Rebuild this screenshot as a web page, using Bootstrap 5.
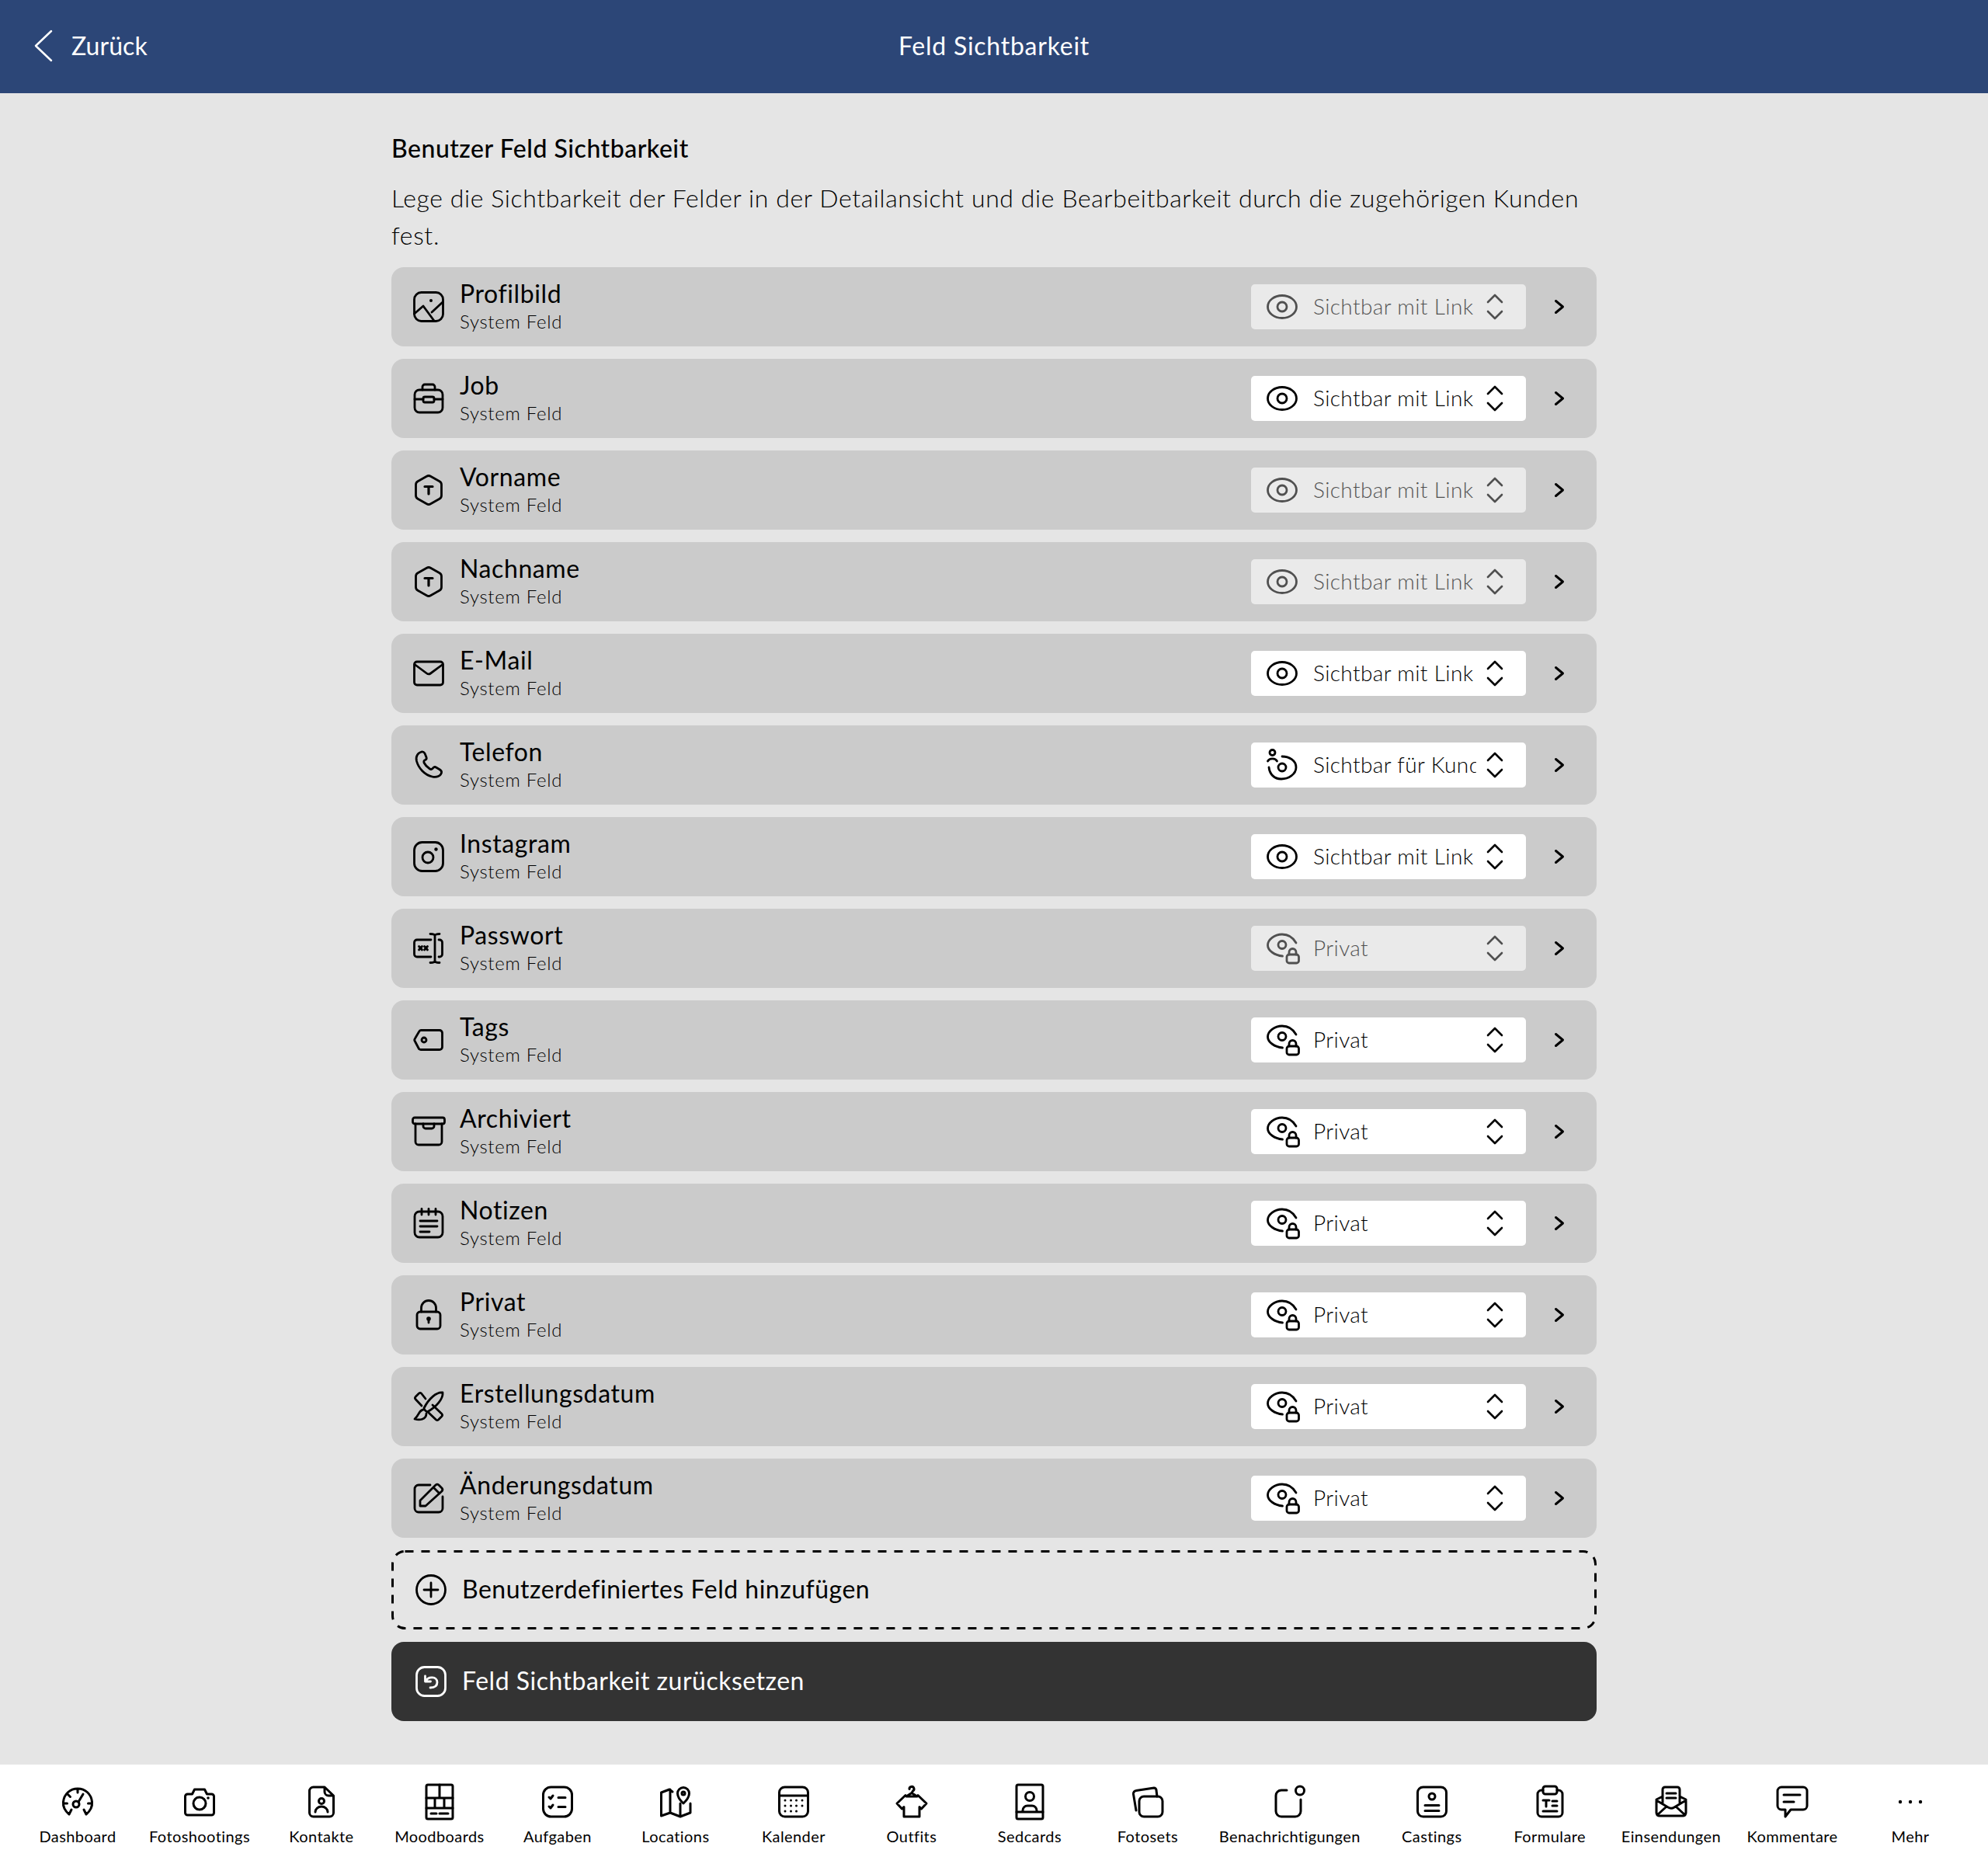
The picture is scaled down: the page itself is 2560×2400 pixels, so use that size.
<!DOCTYPE html>
<html lang="de">
<head>
<meta charset="utf-8">
<title>Feld Sichtbarkeit</title>
<link href="https://cdn.jsdelivr.net/npm/bootstrap@5.3.0/dist/css/bootstrap.min.css" rel="stylesheet">
<style>
body{background:#e5e5e5;font-family:"Lato","Liberation Sans",sans-serif;color:#000;min-height:2400px}
svg,symbol{overflow:visible}
svg{fill:none;stroke:currentColor;stroke-width:2.8;stroke-linecap:round;stroke-linejoin:round}
.ic40{width:40px;height:40px;flex:none}
.topbar{height:120px;background:#2c4677;color:#fff;font-size:32px;letter-spacing:.75px;padding-bottom:2px}
.topbar svg.backic{width:22px;height:40px;stroke-width:2.5}
.backlink{left:45px;top:39px;gap:25px;letter-spacing:.05px;line-height:40px}
.pagewrap{width:1552px;padding-top:47px;padding-bottom:56px}
.h-title{font-size:32px;line-height:48px;margin-bottom:16px;font-weight:500;letter-spacing:.5px}
.intro{font-size:32px;line-height:48px;margin-bottom:17px;font-weight:300;letter-spacing:.6px;padding-bottom:0}
.fieldrow{height:102px;background:#cbcbcb;border-radius:16px;padding:0 42px 0 28px;gap:20px}
.textcol{padding-bottom:2px}
.f-name{font-size:32px;line-height:38px;letter-spacing:.6px}
.f-sub{font-size:24px;line-height:30px;font-weight:300;letter-spacing:.7px;margin-top:2px}
.vis{width:354px;height:58px;background:#fff;border-radius:5px;padding:0 30px 0 20px;font-size:28px;font-weight:300;letter-spacing:.38px}
.vis.off{opacity:.6}
.vis-label{flex:1;overflow:hidden;white-space:nowrap;margin:0 14px 0 20px;padding-bottom:3px}
.updown{width:20px;height:32px;flex:none;stroke-width:2.6}
.rtarrow{width:12px;height:18px;margin-left:17px;stroke-width:3;flex:none}
.actionrow{height:102px;border-radius:16px;padding:0 31px;gap:20px;font-size:32px;letter-spacing:.5px}
.actionrow span{padding-bottom:3px}
.dashrow{position:relative}
.dashline{position:absolute;top:0;left:0;width:1552px;height:102px;stroke-width:3;stroke-dasharray:11 10;stroke-linecap:butt}
.darkrow{background:#333;color:#fff}
.bottombar{height:128px;background:#fff;padding:0 24px}
.navcell{min-width:152px;padding:0 16px;white-space:nowrap;font-size:20px;line-height:24px;letter-spacing:.42px;color:#000}
.navcell svg{margin-top:28px;margin-bottom:12px;stroke-width:3}
.dot{fill:currentColor;stroke:none}
</style>
</head>
<body class="d-flex flex-column">
<svg width="0" height="0" class="position-absolute">
<defs>
<symbol id="eye" viewBox="0 0 40 40"><ellipse cx="20" cy="20" rx="18.5" ry="14.5"/><circle cx="20" cy="20" r="6"/></symbol>
<symbol id="eyeuser" viewBox="0 0 40 40"><circle cx="7.5" cy="4" r="3.5"/><path d="M1.5 15a6.5 5 0 0 1 12 0M20 9c9 0 18 5 18 14 0 9-10 15-19 15-9 0-15-6-16-15"/><circle cx="20" cy="23" r="5"/></symbol>
<symbol id="eyelock" viewBox="0 0 40 40"><path d="M38 13C34 6 27 2 20 2 10 2 1.500 9 1.500 16c0 7 9 13 19 14"/><circle cx="20" cy="15.500" r="5"/><rect x="26" y="28" width="15.500" height="11" rx="3"/><path d="M29 28v-3a4.500 4.500 0 0 1 9 0v3"/></symbol>
<symbol id="ud" viewBox="0 0 20 32"><path d="M1 10 10 1l9 9M1 22l9 9 9-9"/></symbol>
<symbol id="rt" viewBox="0 0 12 18"><path d="M1.500 1.500 10.500 9l-9 7.500"/></symbol>
<symbol id="i-pic" viewBox="0 0 40 40"><rect x="1.500" y="1.500" width="37" height="37" rx="9"/><path d="M1.500 29 13 19l14 19M24 27l14-13"/><circle class="dot" cx="23" cy="12" r="2"/></symbol>
<symbol id="i-job" viewBox="0 0 40 40"><rect x="2" y="9" width="36" height="29" rx="6"/><path d="M12 9V5a3 3 0 0 1 3-3h10a3 3 0 0 1 3 3v4M2 21h11M27 21h11"/><rect x="13" y="18" width="14" height="7" rx="2"/></symbol>
<symbol id="i-hex" viewBox="0 0 40 40"><path d="M17.500 2.200a5 5 0 0 1 5 0l11.500 6.600a5 5 0 0 1 2.500 4.300v13.800a5 5 0 0 1-2.500 4.300l-11.500 6.600a5 5 0 0 1-5 0L6 31.200a5 5 0 0 1-2.500-4.300V13.100A5 5 0 0 1 6 8.800z"/><path stroke-width="3.200" d="M15 15.500h10M20 15.500v9.500"/></symbol>
<symbol id="i-mail" viewBox="0 0 40 40"><rect x="1.500" y="5" width="37" height="30" rx="3.500"/><path d="M2 8.500l15.500 11.500q2.500 1.800 5 0L38 8.500"/></symbol>
<symbol id="i-tel" viewBox="0 0 40 40"><path d="M11 3C6 4 3 9 4.500 15c2.500 9 10 17.500 20 20 6 1.500 11-1 12-5 .5-2-.5-3-2-4l-5-3c-1.500-1-3-.5-4 1-1 1.500-2.500 2-4 1-4-2.500-6-5-7.500-8-.5-1.500 0-3 1.500-3.500 1.500-.5 2-2 1.500-3.500L15 5c-1-1.500-2-2.300-4-2z"/></symbol>
<symbol id="i-insta" viewBox="0 0 40 40"><rect x="1.500" y="1.500" width="37" height="37" rx="10"/><circle cx="19" cy="21" r="7"/><circle class="dot" cx="29.500" cy="10.500" r="2.200"/></symbol>
<symbol id="i-pass" viewBox="0 0 40 40"><path d="M23 9H5a3.500 3.500 0 0 0-3.500 3.500v15A3.500 3.500 0 0 0 5 31h18M33 9h1a3.500 3.500 0 0 1 3.500 3.500v15A3.500 3.500 0 0 1 34 31h-1M28 4v32M22 1.500c3 0 6 .5 6 2.500 0-2 3-2.500 6-2.500M22 38.500c3 0 6-.5 6-2.500 0 2 3 2.500 6 2.500M7.500 17.500l4 4.500m0-4.500l-4 4.500M14.500 17.500l4 4.500m0-4.500l-4 4.500"/></symbol>
<symbol id="i-tag" viewBox="0 0 40 40"><path d="M10 7.500h24a3.500 3.500 0 0 1 3.500 3.500v18a3.500 3.500 0 0 1-3.500 3.500H10q-1.500 0-2.500-1L2.500 22q-1.500-2 0-4l5-8.500q1-2 2.500-2z"/><circle cx="14" cy="20" r="3"/></symbol>
<symbol id="i-arch" viewBox="0 0 40 40"><rect x="-.5" y="2" width="41" height="8" rx="2.500"/><path d="M3 10v23a4 4 0 0 0 4 4h26a4 4 0 0 0 4-4V10M13 10v3a3 3 0 0 0 3 3h8a3 3 0 0 0 3-3v-3"/></symbol>
<symbol id="i-note" viewBox="0 0 40 40"><rect x="2" y="5" width="36" height="33" rx="6"/><path d="M11 1.500V9M20 1.500V9M29 1.500V9M9 17h22M9 24h22M9 31h12"/></symbol>
<symbol id="i-lock" viewBox="0 0 40 40"><rect x="5" y="16" width="30" height="22" rx="4"/><path d="M10.500 16v-5a9.500 9.500 0 0 1 19 0v5M20 26v4"/><circle class="dot" cx="20" cy="25" r="2.800"/></symbol>
<symbol id="i-tools" viewBox="0 0 40 40"><path d="M16 10l-5.500-7q-1.500-1.200-3 0L3 7.500q-1.200 1.500 0 3L11 19M25 18l12 11.500q1.200 1.500 0 3L32.500 37q-1.500 1.200-3 0L19 27"/><path d="M38 2C30 1 20 10 14 22c0 2 3 5 5 4.500C30 20 39 10 38 2zM13 24c-6 1-5 7-11 12 6 2 15 1 15-7"/></symbol>
<symbol id="i-edit" viewBox="0 0 40 40"><path d="M22 3H7a5 5 0 0 0-5 5v25a5 5 0 0 0 5 5h26a5 5 0 0 0 5-5V18"/><path d="M9 30v-7L29 3a3 3 0 0 1 4 0l4 4a3 3 0 0 1 0 4L16 30zM26 6l8 8"/></symbol>
<symbol id="i-plus" viewBox="0 0 40 40"><circle cx="20" cy="20" r="18.500"/><path d="M20 11v18M11 20h18"/></symbol>
<symbol id="i-reset" viewBox="0 0 40 40"><rect x="1.500" y="1.500" width="37" height="37" rx="10"/><path d="M12.500 13v7h7M13 20c3-7 15-7 15 1 0 5-4 7-9 7"/></symbol>
<symbol id="n-dash" viewBox="0 0 40 40"><path d="M9 36C3 31 1 25 1.500 20 2.500 10 10 3 20 3s17.500 7 18.500 17c.5 5-1.500 11-7.500 16M9 36l3-6M31 36l-3-6M20 3v5M7 10l3.500 3.500M1.500 22h5M33.500 22h5"/><circle cx="18" cy="23" r="4"/><path d="M21 20l6-10"/></symbol>
<symbol id="n-cam" viewBox="0 0 40 40"><path d="M1.500 13a3 3 0 0 1 3-3h6l3-6h13l3 6h6a3 3 0 0 1 3 3v21a3 3 0 0 1-3 3h-31a3 3 0 0 1-3-3z"/><circle cx="20" cy="22" r="8"/><circle class="dot" cx="31" cy="15" r="1.800"/></symbol>
<symbol id="n-doc" viewBox="0 0 40 40"><path d="M9.500 1H24l11.500 11v22a5 5 0 0 1-5 5h-21a5 5 0 0 1-5-5V6a5 5 0 0 1 5-5zM24 1v6a5 5 0 0 0 5 5h6.500"/><circle cx="20" cy="19" r="3.500"/><path d="M12 33a8 7 0 0 1 16 0"/></symbol>
<symbol id="n-mood" viewBox="0 0 40 40"><rect x="3" y="-2" width="34" height="44" rx="2"/><path d="M3 15h34M3 28h34M20 -2v17M14 15v13M26 15v13M9 35h7M20 35h11"/></symbol>
<symbol id="n-task" viewBox="0 0 40 40"><rect x="1.500" y="1" width="37" height="38" rx="10"/><path d="M9 14l2 2 3-4M9 26l2 2 3-4M21 14.500h9M21 26.500h9"/></symbol>
<symbol id="n-map" viewBox="0 0 40 40"><path d="M16 7L12 4 1.500 8v30L13 34l13 5 13-5V22M13 4v30M26 22v17"/><path d="M30 1.500a7.500 7.500 0 0 1 7.500 7.500C37.500 15 30 22 30 22s-7.500-7-7.500-13A7.500 7.500 0 0 1 30 1.500z"/><circle cx="30" cy="9" r="2"/></symbol>
<symbol id="n-cal" viewBox="0 0 40 40"><rect x="1.500" y="1" width="37" height="38" rx="7"/><path d="M1.500 12h37"/><g class="dot"><circle cx="9" cy="18" r="1.500"/><circle cx="16.500" cy="18" r="1.500"/><circle cx="23.500" cy="18" r="1.500"/><circle cx="31" cy="18" r="1.500"/><circle cx="9" cy="25" r="1.500"/><circle cx="16.500" cy="25" r="1.500"/><circle cx="23.500" cy="25" r="1.500"/><circle cx="31" cy="25" r="1.500"/><circle cx="9" cy="32" r="1.500"/><circle cx="16.500" cy="32" r="1.500"/><circle cx="23.500" cy="32" r="1.500"/></g></symbol>
<symbol id="n-shirt" viewBox="0 0 40 40"><path d="M17 3.500a3 3 0 1 1 4.500 2.500L20 8.500M20 8.500 13 13h14zM12 11.500 1 22l6.500 7 2.500-2.500V39h20V26.500l2.500 2.500 6.500-7-11-10.500"/></symbol>
<symbol id="n-sed" viewBox="0 0 40 40"><rect x="3" y="-2" width="34" height="44" rx="2"/><path d="M3 33h34M11 33v-2a6 6 0 0 1 6-6h6a6 6 0 0 1 6 6v2"/><circle cx="20" cy="13" r="5.500"/></symbol>
<symbol id="n-sets" viewBox="0 0 40 40"><rect x="9" y="13" width="30" height="26" rx="6"/><path d="M5 31L1.500 10a4 4 0 0 1 3.500-4.500L28 2a3 3 0 0 1 3 3l1 8"/></symbol>
<symbol id="n-bell" viewBox="0 0 40 40"><path d="M16 5H9a7 7 0 0 0-7 7v20a7 7 0 0 0 7 7h18a7 7 0 0 0 7-7V17"/><circle cx="33" cy="5.500" r="5.500"/></symbol>
<symbol id="n-cast" viewBox="0 0 40 40"><rect x="1.500" y="1" width="37" height="38" rx="7"/><circle cx="20" cy="13" r="4"/><path d="M11 24.500h18M11 31.500h18"/></symbol>
<symbol id="n-form" viewBox="0 0 40 40"><path d="M11 5H9a5 5 0 0 0-5 5v24a5 5 0 0 0 5 5h22a5 5 0 0 0 5-5V10a5 5 0 0 0-5-5h-2"/><rect x="11" y="0" width="18" height="10" rx="3"/><path d="M11 18h8M15 18v8M23 19h6M23 25h6M11 32h18"/></symbol>
<symbol id="n-env" viewBox="0 0 40 40"><path d="M9 13l-8 4v17a4 4 0 0 0 4 4h30a4 4 0 0 0 4-4V17l-8-4M9 21V4a3 3 0 0 1 3-3h16a3 3 0 0 1 3 3v17M1 18l15 9q4 2.500 8 0l15-9M2 37l12-11M38 37L26 26M14 9h12M14 15h12"/></symbol>
<symbol id="n-com" viewBox="0 0 40 40"><path d="M6 1h28a5 5 0 0 1 5 5v19a5 5 0 0 1-5 5H18l-7 9v-9H6a5 5 0 0 1-5-5V6a5 5 0 0 1 5-5zM9 11h21M9 20h13"/></symbol>
<symbol id="n-more" viewBox="0 0 40 40"><g class="dot"><circle cx="7" cy="20" r="2.200"/><circle cx="20" cy="20" r="2.200"/><circle cx="33" cy="20" r="2.200"/></g></symbol>
</defs>
</svg>

<header class="topbar d-flex align-items-center justify-content-center position-relative">
  <a class="backlink position-absolute d-flex align-items-center text-white text-decoration-none" href="#">
    <svg class="backic" viewBox="0 0 22 40"><path d="M21 1 1 20l20 19"/></svg><span>Zurück</span>
  </a>
  <span>Feld Sichtbarkeit</span>
</header>

<main class="pagewrap mx-auto flex-grow-1">
  <div class="h-title">Benutzer Feld Sichtbarkeit</div>
  <p class="intro">Lege die Sichtbarkeit der Felder in der Detailansicht und die Bearbeitbarkeit durch die zugehörigen Kunden fest.</p>
  <div class="d-flex flex-column gap-3">
    <div class="fieldrow d-flex align-items-center"><svg class="ic40"><use href="#i-pic"/></svg><div class="textcol flex-grow-1"><div class="f-name">Profilbild</div><div class="f-sub">System Feld</div></div><div class="vis off d-flex align-items-center"><svg class="ic40"><use href="#eye"/></svg><span class="vis-label">Sichtbar mit Link</span><svg class="updown"><use href="#ud"/></svg></div><svg class="rtarrow"><use href="#rt"/></svg></div>
    <div class="fieldrow d-flex align-items-center"><svg class="ic40"><use href="#i-job"/></svg><div class="textcol flex-grow-1"><div class="f-name">Job</div><div class="f-sub">System Feld</div></div><div class="vis d-flex align-items-center"><svg class="ic40"><use href="#eye"/></svg><span class="vis-label">Sichtbar mit Link</span><svg class="updown"><use href="#ud"/></svg></div><svg class="rtarrow"><use href="#rt"/></svg></div>
    <div class="fieldrow d-flex align-items-center"><svg class="ic40"><use href="#i-hex"/></svg><div class="textcol flex-grow-1"><div class="f-name">Vorname</div><div class="f-sub">System Feld</div></div><div class="vis off d-flex align-items-center"><svg class="ic40"><use href="#eye"/></svg><span class="vis-label">Sichtbar mit Link</span><svg class="updown"><use href="#ud"/></svg></div><svg class="rtarrow"><use href="#rt"/></svg></div>
    <div class="fieldrow d-flex align-items-center"><svg class="ic40"><use href="#i-hex"/></svg><div class="textcol flex-grow-1"><div class="f-name">Nachname</div><div class="f-sub">System Feld</div></div><div class="vis off d-flex align-items-center"><svg class="ic40"><use href="#eye"/></svg><span class="vis-label">Sichtbar mit Link</span><svg class="updown"><use href="#ud"/></svg></div><svg class="rtarrow"><use href="#rt"/></svg></div>
    <div class="fieldrow d-flex align-items-center"><svg class="ic40"><use href="#i-mail"/></svg><div class="textcol flex-grow-1"><div class="f-name">E-Mail</div><div class="f-sub">System Feld</div></div><div class="vis d-flex align-items-center"><svg class="ic40"><use href="#eye"/></svg><span class="vis-label">Sichtbar mit Link</span><svg class="updown"><use href="#ud"/></svg></div><svg class="rtarrow"><use href="#rt"/></svg></div>
    <div class="fieldrow d-flex align-items-center"><svg class="ic40"><use href="#i-tel"/></svg><div class="textcol flex-grow-1"><div class="f-name">Telefon</div><div class="f-sub">System Feld</div></div><div class="vis d-flex align-items-center"><svg class="ic40"><use href="#eyeuser"/></svg><span class="vis-label">Sichtbar für Kunden</span><svg class="updown"><use href="#ud"/></svg></div><svg class="rtarrow"><use href="#rt"/></svg></div>
    <div class="fieldrow d-flex align-items-center"><svg class="ic40"><use href="#i-insta"/></svg><div class="textcol flex-grow-1"><div class="f-name">Instagram</div><div class="f-sub">System Feld</div></div><div class="vis d-flex align-items-center"><svg class="ic40"><use href="#eye"/></svg><span class="vis-label">Sichtbar mit Link</span><svg class="updown"><use href="#ud"/></svg></div><svg class="rtarrow"><use href="#rt"/></svg></div>
    <div class="fieldrow d-flex align-items-center"><svg class="ic40"><use href="#i-pass"/></svg><div class="textcol flex-grow-1"><div class="f-name">Passwort</div><div class="f-sub">System Feld</div></div><div class="vis off d-flex align-items-center"><svg class="ic40"><use href="#eyelock"/></svg><span class="vis-label">Privat</span><svg class="updown"><use href="#ud"/></svg></div><svg class="rtarrow"><use href="#rt"/></svg></div>
    <div class="fieldrow d-flex align-items-center"><svg class="ic40"><use href="#i-tag"/></svg><div class="textcol flex-grow-1"><div class="f-name">Tags</div><div class="f-sub">System Feld</div></div><div class="vis d-flex align-items-center"><svg class="ic40"><use href="#eyelock"/></svg><span class="vis-label">Privat</span><svg class="updown"><use href="#ud"/></svg></div><svg class="rtarrow"><use href="#rt"/></svg></div>
    <div class="fieldrow d-flex align-items-center"><svg class="ic40"><use href="#i-arch"/></svg><div class="textcol flex-grow-1"><div class="f-name">Archiviert</div><div class="f-sub">System Feld</div></div><div class="vis d-flex align-items-center"><svg class="ic40"><use href="#eyelock"/></svg><span class="vis-label">Privat</span><svg class="updown"><use href="#ud"/></svg></div><svg class="rtarrow"><use href="#rt"/></svg></div>
    <div class="fieldrow d-flex align-items-center"><svg class="ic40"><use href="#i-note"/></svg><div class="textcol flex-grow-1"><div class="f-name">Notizen</div><div class="f-sub">System Feld</div></div><div class="vis d-flex align-items-center"><svg class="ic40"><use href="#eyelock"/></svg><span class="vis-label">Privat</span><svg class="updown"><use href="#ud"/></svg></div><svg class="rtarrow"><use href="#rt"/></svg></div>
    <div class="fieldrow d-flex align-items-center"><svg class="ic40"><use href="#i-lock"/></svg><div class="textcol flex-grow-1"><div class="f-name">Privat</div><div class="f-sub">System Feld</div></div><div class="vis d-flex align-items-center"><svg class="ic40"><use href="#eyelock"/></svg><span class="vis-label">Privat</span><svg class="updown"><use href="#ud"/></svg></div><svg class="rtarrow"><use href="#rt"/></svg></div>
    <div class="fieldrow d-flex align-items-center"><svg class="ic40"><use href="#i-tools"/></svg><div class="textcol flex-grow-1"><div class="f-name">Erstellungsdatum</div><div class="f-sub">System Feld</div></div><div class="vis d-flex align-items-center"><svg class="ic40"><use href="#eyelock"/></svg><span class="vis-label">Privat</span><svg class="updown"><use href="#ud"/></svg></div><svg class="rtarrow"><use href="#rt"/></svg></div>
    <div class="fieldrow d-flex align-items-center"><svg class="ic40"><use href="#i-edit"/></svg><div class="textcol flex-grow-1"><div class="f-name">Änderungsdatum</div><div class="f-sub">System Feld</div></div><div class="vis d-flex align-items-center"><svg class="ic40"><use href="#eyelock"/></svg><span class="vis-label">Privat</span><svg class="updown"><use href="#ud"/></svg></div><svg class="rtarrow"><use href="#rt"/></svg></div>
    <div class="actionrow dashrow d-flex align-items-center"><svg class="dashline"><rect x="1.500" y="1.500" width="1549" height="99" rx="16"/></svg><svg class="ic40"><use href="#i-plus"/></svg><span>Benutzerdefiniertes Feld hinzufügen</span></div>
    <div class="actionrow darkrow d-flex align-items-center"><svg class="ic40"><use href="#i-reset"/></svg><span>Feld Sichtbarkeit zurücksetzen</span></div>
  </div>
</main>

<nav class="bottombar d-flex justify-content-between">
  <div class="navcell d-flex flex-column align-items-center"><svg class="ic40"><use href="#n-dash"/></svg><span>Dashboard</span></div>
  <div class="navcell d-flex flex-column align-items-center"><svg class="ic40"><use href="#n-cam"/></svg><span>Fotoshootings</span></div>
  <div class="navcell d-flex flex-column align-items-center"><svg class="ic40"><use href="#n-doc"/></svg><span>Kontakte</span></div>
  <div class="navcell d-flex flex-column align-items-center"><svg class="ic40"><use href="#n-mood"/></svg><span>Moodboards</span></div>
  <div class="navcell d-flex flex-column align-items-center"><svg class="ic40"><use href="#n-task"/></svg><span>Aufgaben</span></div>
  <div class="navcell d-flex flex-column align-items-center"><svg class="ic40"><use href="#n-map"/></svg><span>Locations</span></div>
  <div class="navcell d-flex flex-column align-items-center"><svg class="ic40"><use href="#n-cal"/></svg><span>Kalender</span></div>
  <div class="navcell d-flex flex-column align-items-center"><svg class="ic40"><use href="#n-shirt"/></svg><span>Outfits</span></div>
  <div class="navcell d-flex flex-column align-items-center"><svg class="ic40"><use href="#n-sed"/></svg><span>Sedcards</span></div>
  <div class="navcell d-flex flex-column align-items-center"><svg class="ic40"><use href="#n-sets"/></svg><span>Fotosets</span></div>
  <div class="navcell d-flex flex-column align-items-center"><svg class="ic40"><use href="#n-bell"/></svg><span>Benachrichtigungen</span></div>
  <div class="navcell d-flex flex-column align-items-center"><svg class="ic40"><use href="#n-cast"/></svg><span>Castings</span></div>
  <div class="navcell d-flex flex-column align-items-center"><svg class="ic40"><use href="#n-form"/></svg><span>Formulare</span></div>
  <div class="navcell d-flex flex-column align-items-center"><svg class="ic40"><use href="#n-env"/></svg><span>Einsendungen</span></div>
  <div class="navcell d-flex flex-column align-items-center"><svg class="ic40"><use href="#n-com"/></svg><span>Kommentare</span></div>
  <div class="navcell d-flex flex-column align-items-center"><svg class="ic40"><use href="#n-more"/></svg><span>Mehr</span></div>
</nav>
<script src="https://cdn.jsdelivr.net/npm/bootstrap@5.3.0/dist/js/bootstrap.bundle.min.js"></script>
</body>
</html>
